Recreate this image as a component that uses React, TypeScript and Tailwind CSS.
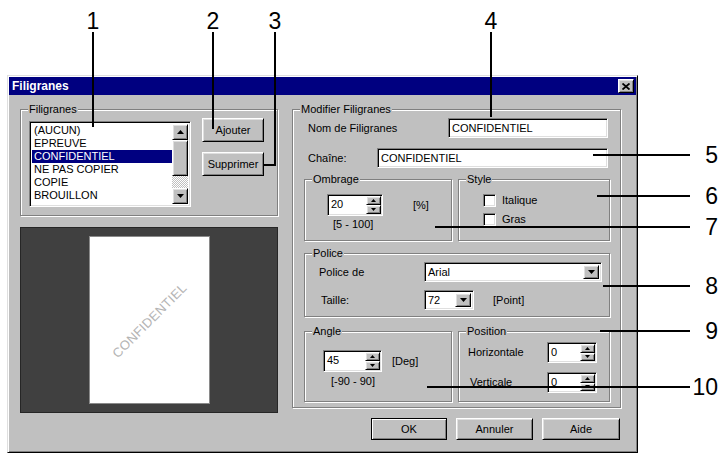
import type { ReactNode } from "react";

const raised =
  "border border-t-white border-l-white border-r-black border-b-black bg-[#c0c0c0] shadow-[inset_1px_1px_0_#dfdfdf,inset_-1px_-1px_0_#808080]";
const sunken =
  "border border-t-[#808080] border-l-[#808080] border-r-white border-b-white bg-white shadow-[inset_1px_1px_0_#000,inset_-1px_-1px_0_#dfdfdf]";

const items = ["(AUCUN)", "EPREUVE", "CONFIDENTIEL", "NE PAS COPIER", "COPIE", "BROUILLON", "FINAL"];

function Arrow({ up, size = "small" }: { up?: boolean; size?: "small" | "big" }) {
  const w = size === "big" ? 7 : 5;
  const h = size === "big" ? 4 : 3;
  return (
    <svg width={w} height={h} viewBox={`0 0 ${w} ${h}`} className="block">
      <polygon points={up ? `0,${h} ${w},${h} ${w / 2},0` : `0,0 ${w},0 ${w / 2},${h}`} fill="#000" />
    </svg>
  );
}

function Group({ label, className, children }: { label: string; className: string; children?: ReactNode }) {
  return (
    <div className={`relative border border-[#808080] shadow-[1px_1px_0_#fff,inset_1px_1px_0_#fff] ${className}`}>
      <span className="absolute -top-[7px] left-[7px] bg-[#c0c0c0] px-[1px] leading-[13px]">{label}</span>
      {children}
    </div>
  );
}

function Spin({ value, className }: { value: string; className: string }) {
  return (
    <div className={`${sunken} flex items-stretch p-[1px] ${className}`}>
      <span className="flex-1 pl-[2px] pt-[2px]">{value}</span>
      <div className="flex w-[15px] flex-col">
        <div className={`${raised} flex flex-1 items-center justify-center`}>
          <Arrow up />
        </div>
        <div className={`${raised} flex flex-1 items-center justify-center`}>
          <Arrow />
        </div>
      </div>
    </div>
  );
}

function Combo({ value, className }: { value: string; className: string }) {
  return (
    <div className={`${sunken} flex h-[20px] items-stretch p-[2px] ${className}`}>
      <span className="flex-1 pl-[1px] leading-[14px]">{value}</span>
      <div className={`${raised} flex w-[16px] items-center justify-center`}>
        <Arrow size="big" />
      </div>
    </div>
  );
}

function CheckBox({ label }: { label: string }) {
  return (
    <div className="flex h-[13px] items-center gap-[6px]">
      <span className={`${sunken} h-[13px] w-[13px]`} />
      <span>{label}</span>
    </div>
  );
}

export default function App() {
  return (
    <div className="relative h-[457px] w-[726px] overflow-hidden bg-white pl-[7px] pt-[75px] font-['Liberation_Sans',Arial,sans-serif] text-[11px] leading-[13px] text-black">
      <div className="flex h-[378px] w-[631px] flex-col border border-t-[#dfdfdf] border-l-[#dfdfdf] border-r-black border-b-black bg-[#c0c0c0] p-[1px] shadow-[inset_1px_1px_0_#fff,inset_-1px_-1px_0_#808080]">
        <div className="flex h-[18px] items-center justify-between bg-[#000080] pl-[3px] pr-[2px]">
          <span className="text-[12px] font-bold text-white">Filigranes</span>
          <div className={`${raised} flex h-[14px] w-[16px] items-center justify-center`}>
            <svg width="8" height="7" viewBox="0 0 8 7">
              <path d="M0.5 0.5 L7.5 6.5 M7.5 0.5 L0.5 6.5" stroke="#000" strokeWidth="1.8" />
            </svg>
          </div>
        </div>

        <div className="flex pl-[11px] pt-[14px]">
          {/* colonne gauche */}
          <div className="flex w-[258px] flex-col">
            <Group label="Filigranes" className="h-[107px]">
              <div className="flex items-start pl-[8px] pt-[8px]">
                <div className={`${sunken} mt-[3px] flex h-[86px] w-[162px] p-[2px]`}>
                  <div className="flex-1 overflow-hidden">
                    {items.map((item) => (
                      <div
                        key={item}
                        className={`h-[13px] pl-[2px] leading-[13px] ${item === "CONFIDENTIEL" ? "bg-[#000080] text-white" : ""}`}
                      >
                        {item}
                      </div>
                    ))}
                  </div>
                  <div className="flex w-[16px] flex-col">
                    <div className={`${raised} flex h-[16px] items-center justify-center`}>
                      <Arrow up size="big" />
                    </div>
                    <div className={`${raised} h-[36px]`} />
                    <div className="flex-1 bg-[repeating-conic-gradient(#c0c0c0_0_25%,#fff_0_50%)] bg-[length:2px_2px]" />
                    <div className={`${raised} flex h-[16px] items-center justify-center`}>
                      <Arrow size="big" />
                    </div>
                  </div>
                </div>
                <div className="ml-[11px] flex w-[62px] flex-col gap-[10px]">
                  <button className={`${raised} h-[24px] w-full`}>Ajouter</button>
                  <button className={`${raised} h-[24px] w-full`}>Supprimer</button>
                </div>
              </div>
            </Group>

            <div className="mt-[11px] flex h-[186px] items-center justify-center border border-[#262626] bg-[#404040]">
              <div className="flex h-[168px] w-[121px] items-center justify-center border border-[#8a8a8a] bg-white">
                <span className="-rotate-45 whitespace-nowrap text-[13px] tracking-[0.3px] text-[#b4b4b4]">CONFIDENTIEL</span>
              </div>
            </div>
          </div>

          {/* colonne droite */}
          <div className="ml-[14px] flex w-[329px] flex-col">
            <Group label="Modifier Filigranes" className="flex h-[299px] flex-col pl-[11px] pr-[10px]">
              <div className="mt-[8px] flex h-[20px] items-center justify-between">
                <span className="pl-[4px]">Nom de Filigranes</span>
                <div className={`${sunken} mr-[2px] h-[20px] w-[160px] pl-[3px] pt-[3px]`}>CONFIDENTIEL</div>
              </div>
              <div className="mt-[10px] flex h-[20px] items-center justify-between">
                <span className="pl-[4px]">Chaîne:</span>
                <div className={`${sunken} mr-[2px] h-[20px] w-[231px] pl-[3px] pt-[3px]`}>CONFIDENTIEL</div>
              </div>

              <div className="mt-[11px] flex gap-[6px]">
                <Group label="Ombrage" className="h-[62px] w-[148px]">
                  <div className="flex items-center pl-[22px] pt-[14px]">
                    <Spin value="20" className="h-[22px] w-[56px]" />
                    <span className="ml-[30px]">[%]</span>
                  </div>
                  <div className="mt-[2px] pl-[28px]">[5 - 100]</div>
                </Group>
                <Group label="Style" className="flex h-[62px] w-[152px] flex-col gap-[6px] pl-[24px] pt-[14px]">
                  <CheckBox label="Italique" />
                  <CheckBox label="Gras" />
                </Group>
              </div>

              <Group label="Police" className="mt-[12px] h-[64px] pl-[14px] pt-[8px]">
                <div className="flex h-[20px] items-center">
                  <span className="w-[105px]">Police de</span>
                  <Combo value="Arial" className="w-[178px]" />
                </div>
                <div className="mt-[8px] flex h-[20px] items-center">
                  <span className="w-[105px] pl-[2px]">Taille:</span>
                  <Combo value="72" className="w-[50px]" />
                  <span className="ml-[19px]">[Point]</span>
                </div>
              </Group>

              <div className="mt-[14px] flex gap-[6px]">
                <Group label="Angle" className="h-[71px] w-[148px] pl-[18px] pt-[18px]">
                  <div className="flex items-center">
                    <Spin value="45" className="h-[22px] w-[59px]" />
                    <span className="ml-[10px]">[Deg]</span>
                  </div>
                  <div className="mt-[3px] pl-[8px]">[-90 - 90]</div>
                </Group>
                <Group label="Position" className="h-[71px] w-[152px] pl-[9px] pt-[10px]">
                  <div className="flex h-[21px] items-center">
                    <span className="w-[79px]">Horizontale</span>
                    <Spin value="0" className="h-[21px] w-[50px]" />
                  </div>
                  <div className="mt-[9px] flex h-[21px] items-center">
                    <span className="w-[79px] pl-[2px]">Verticale</span>
                    <Spin value="0" className="h-[21px] w-[50px]" />
                  </div>
                </Group>
              </div>
            </Group>

            <div className="mt-[10px] flex justify-end gap-[9px] pr-[1px]">
              <button className="h-[22px] w-[76px] border border-black bg-[#c0c0c0] shadow-[inset_1px_1px_0_#fff,inset_-1px_-1px_0_#808080]">OK</button>
              <button className={`${raised} h-[22px] w-[77px]`}>Annuler</button>
              <button className={`${raised} h-[22px] w-[78px]`}>Aide</button>
            </div>
          </div>
        </div>
      </div>

      {/* repères */}
      <div className="absolute left-[78px] top-[10px] w-[30px] text-center text-[23px] leading-[23px]">1</div>
      <div className="absolute left-[198px] top-[10px] w-[30px] text-center text-[23px] leading-[23px]">2</div>
      <div className="absolute left-[260px] top-[10px] w-[30px] text-center text-[23px] leading-[23px]">3</div>
      <div className="absolute left-[476px] top-[10px] w-[30px] text-center text-[23px] leading-[23px]">4</div>
      <div className="absolute left-[92px] top-[32px] h-[95px] w-[2px] bg-black" />
      <div className="absolute left-[212px] top-[32px] h-[97px] w-[2px] bg-black" />
      <div className="absolute left-[274px] top-[32px] h-[134px] w-[2px] bg-black" />
      <div className="absolute left-[263px] top-[164px] h-[2px] w-[12px] bg-black" />
      <div className="absolute left-[490px] top-[32px] h-[85px] w-[2px] bg-black" />

      <div className="absolute left-[593px] top-[154px] h-[2px] w-[97px] bg-black" />
      <div className="absolute left-[597px] top-[195px] h-[2px] w-[93px] bg-black" />
      <div className="absolute left-[435px] top-[226px] h-[2px] w-[255px] bg-black" />
      <div className="absolute left-[603px] top-[285px] h-[2px] w-[87px] bg-black" />
      <div className="absolute left-[600px] top-[330px] h-[2px] w-[90px] bg-black" />
      <div className="absolute left-[427px] top-[386px] h-[2px] w-[263px] bg-black" />
      <div className="absolute left-[680px] top-[144px] w-[38px] text-right text-[23px] leading-[23px]">5</div>
      <div className="absolute left-[680px] top-[185px] w-[38px] text-right text-[23px] leading-[23px]">6</div>
      <div className="absolute left-[680px] top-[216px] w-[38px] text-right text-[23px] leading-[23px]">7</div>
      <div className="absolute left-[680px] top-[275px] w-[38px] text-right text-[23px] leading-[23px]">8</div>
      <div className="absolute left-[680px] top-[320px] w-[38px] text-right text-[23px] leading-[23px]">9</div>
      <div className="absolute left-[680px] top-[376px] w-[38px] text-right text-[23px] leading-[23px]">10</div>
    </div>
  );
}
